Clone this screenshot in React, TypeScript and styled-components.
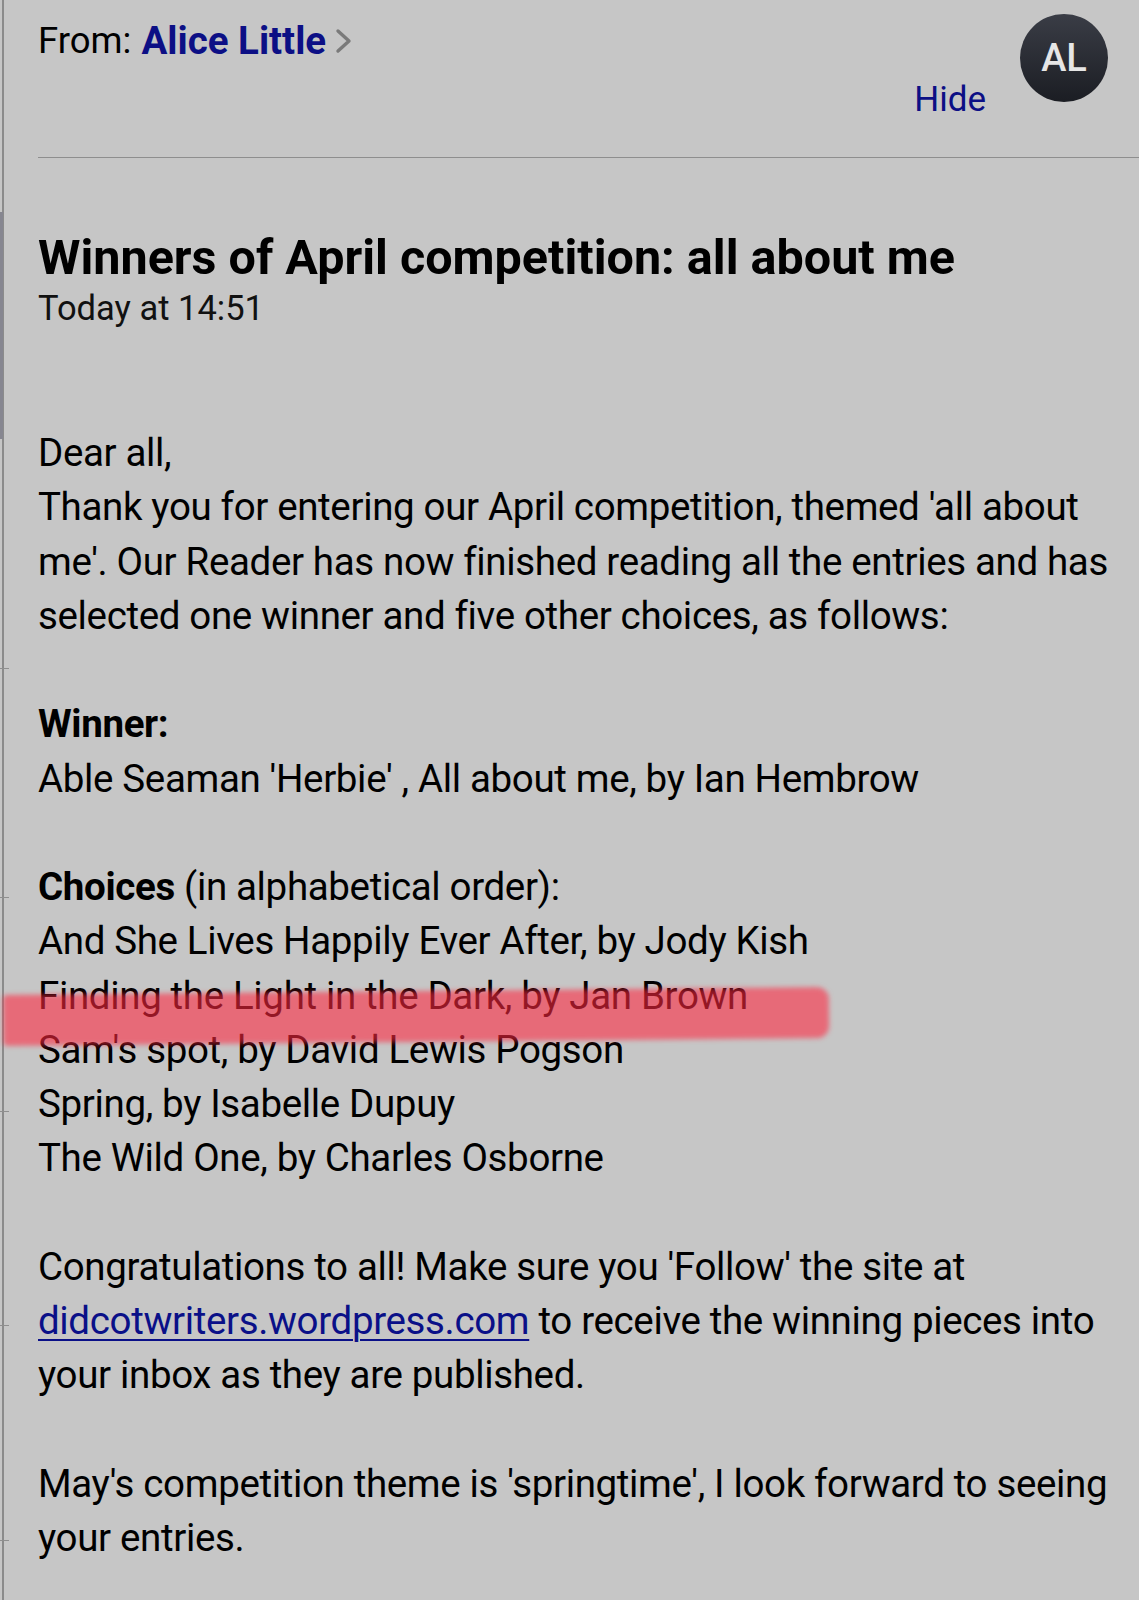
import React from 'react'
import styled, { createGlobalStyle } from 'styled-components'

const GlobalStyle = createGlobalStyle`
    html, body {
        margin: 0;
        padding: 0;
        background: #c6c6c6;
    }
    body {
        font-family: Roboto, "Liberation Sans", sans-serif;
        color: #000;
        -webkit-font-smoothing: antialiased;
    }
`

const Page = styled.div`
    display: flex;
    min-height: 1600px;
    background: #c6c6c6;
`

const Rail = styled.div`
    position: relative;
    flex: 0 0 4px;
    background: linear-gradient(to right, transparent 2px, #8b8b8b 2px);
`

const RailShade = styled.div`
    position: absolute;
    left: 0;
    top: 212px;
    width: 3px;
    height: 227px;
    background: #868690;
`

const RailTick = styled.div<{ $top: number }>`
    position: absolute;
    left: 0;
    top: ${props => props.$top}px;
    width: 9px;
    height: 1px;
    background: #8f8f8f;
`

const Content = styled.div`
    flex: 1;
    min-width: 0;
`

const Header = styled.header`
    display: flex;
    align-items: flex-start;
    height: 158px;
    box-sizing: border-box;
    margin-left: 34px;
    padding: 14px 31px 0 0;
    border-bottom: 1px solid #8e8e8e;
`

const FromLine = styled.div`
    flex: 1;
    display: flex;
    align-items: center;
    margin-top: 7px;
    font-size: 36.5px;
    line-height: 40px;
`

const Sender = styled.span`
    color: #0c0f85;
    font-size: 38.5px;
    font-weight: 700;
    margin-left: 10px;
`

const Chevron = styled.svg`
    width: 18px;
    height: 26px;
    margin-left: 9px;
`

const HideLink = styled.span`
    margin-top: 66px;
    margin-right: 34px;
    font-size: 35px;
    line-height: 40px;
    color: #0c0f85;
`

const Avatar = styled.div`
    width: 88px;
    height: 88px;
    border-radius: 50%;
    background: linear-gradient(#3a3d46, #1b1d23);
    color: #e6e6e6;
    display: flex;
    align-items: center;
    justify-content: center;
    font-size: 38px;
    font-weight: 500;
`

const Body = styled.div`
    padding-left: 34px;
`

const Title = styled.h1`
    margin: 73px 0 0;
    font-size: 48.5px;
    line-height: 54px;
    font-weight: 700;
`

const Stamp = styled.div`
    margin-top: 3px;
    font-size: 34.5px;
    line-height: 40px;
    color: #111;
`

const Message = styled.div`
    margin-top: 98px;
    font-size: 38.5px;
    line-height: 54.25px;
    letter-spacing: -0.35px;
    white-space: nowrap;
`

const Para = styled.p`
    margin: 0 0 54.25px;
`

const Strong = styled.b`
    font-weight: 700;
`

const Link = styled.a`
    color: #0a1088;
    text-decoration: underline;
    text-decoration-thickness: 2px;
    text-underline-offset: 5px;
`

const Marked = styled.span`
    position: relative;
    display: inline-block;
`

const Marker = styled.span`
    position: absolute;
    left: -35px;
    top: 22px;
    width: 826px;
    height: 51px;
    background: rgba(255, 39, 63, 0.58);
    border-radius: 4px 12px 12px 4px;
    transform: rotate(-0.55deg);
    filter: blur(2.5px);
    pointer-events: none;
`

const choices = [
    'And She Lives Happily Ever After, by Jody Kish',
    'Finding the Light in the Dark, by Jan Brown',
    "Sam's spot, by David Lewis Pogson",
    'Spring, by Isabelle Dupuy',
    'The Wild One, by Charles Osborne',
]

export default function App() {
    return (
        <>
            <GlobalStyle />
            <Page>
                <Rail>
                    <RailShade />
                    {[668, 897, 1111, 1325, 1540].map(t => <RailTick key={t} $top={t} />)}
                </Rail>
                <Content>
                    <Header>
                        <FromLine>
                            From:<Sender>Alice Little</Sender>
                            <Chevron viewBox="0 0 18 26">
                                <polyline points="3,3 14,13 3,23" fill="none" stroke="#7a7a7a" strokeWidth="3.4" strokeLinecap="round" strokeLinejoin="round" />
                            </Chevron>
                        </FromLine>
                        <HideLink>Hide</HideLink>
                        <Avatar>AL</Avatar>
                    </Header>
                    <Body>
                        <Title>Winners of April competition: all about me</Title>
                        <Stamp>Today at 14:51</Stamp>
                        <Message>
                            <Para>
                                Dear all,<br />
                                Thank you for entering our April competition, themed 'all about<br />
                                me'. Our Reader has now finished reading all the entries and has<br />
                                selected one winner and five other choices, as follows:
                            </Para>
                            <Para>
                                <Strong>Winner:</Strong><br />
                                Able Seaman 'Herbie' , All about me, by Ian Hembrow
                            </Para>
                            <Para>
                                <Strong>Choices</Strong> (in alphabetical order):
                                {choices.map((c, i) => (
                                    <React.Fragment key={c}>
                                        <br />
                                        {i === 1 ? <Marked>{c}<Marker /></Marked> : c}
                                    </React.Fragment>
                                ))}
                            </Para>
                            <Para>
                                Congratulations to all! Make sure you 'Follow' the site at<br />
                                <Link href="#">didcotwriters.wordpress.com</Link> to receive the winning pieces into<br />
                                your inbox as they are published.
                            </Para>
                            <Para>
                                May's competition theme is 'springtime', I look forward to seeing<br />
                                your entries.
                            </Para>
                        </Message>
                    </Body>
                </Content>
            </Page>
        </>
    )
}
